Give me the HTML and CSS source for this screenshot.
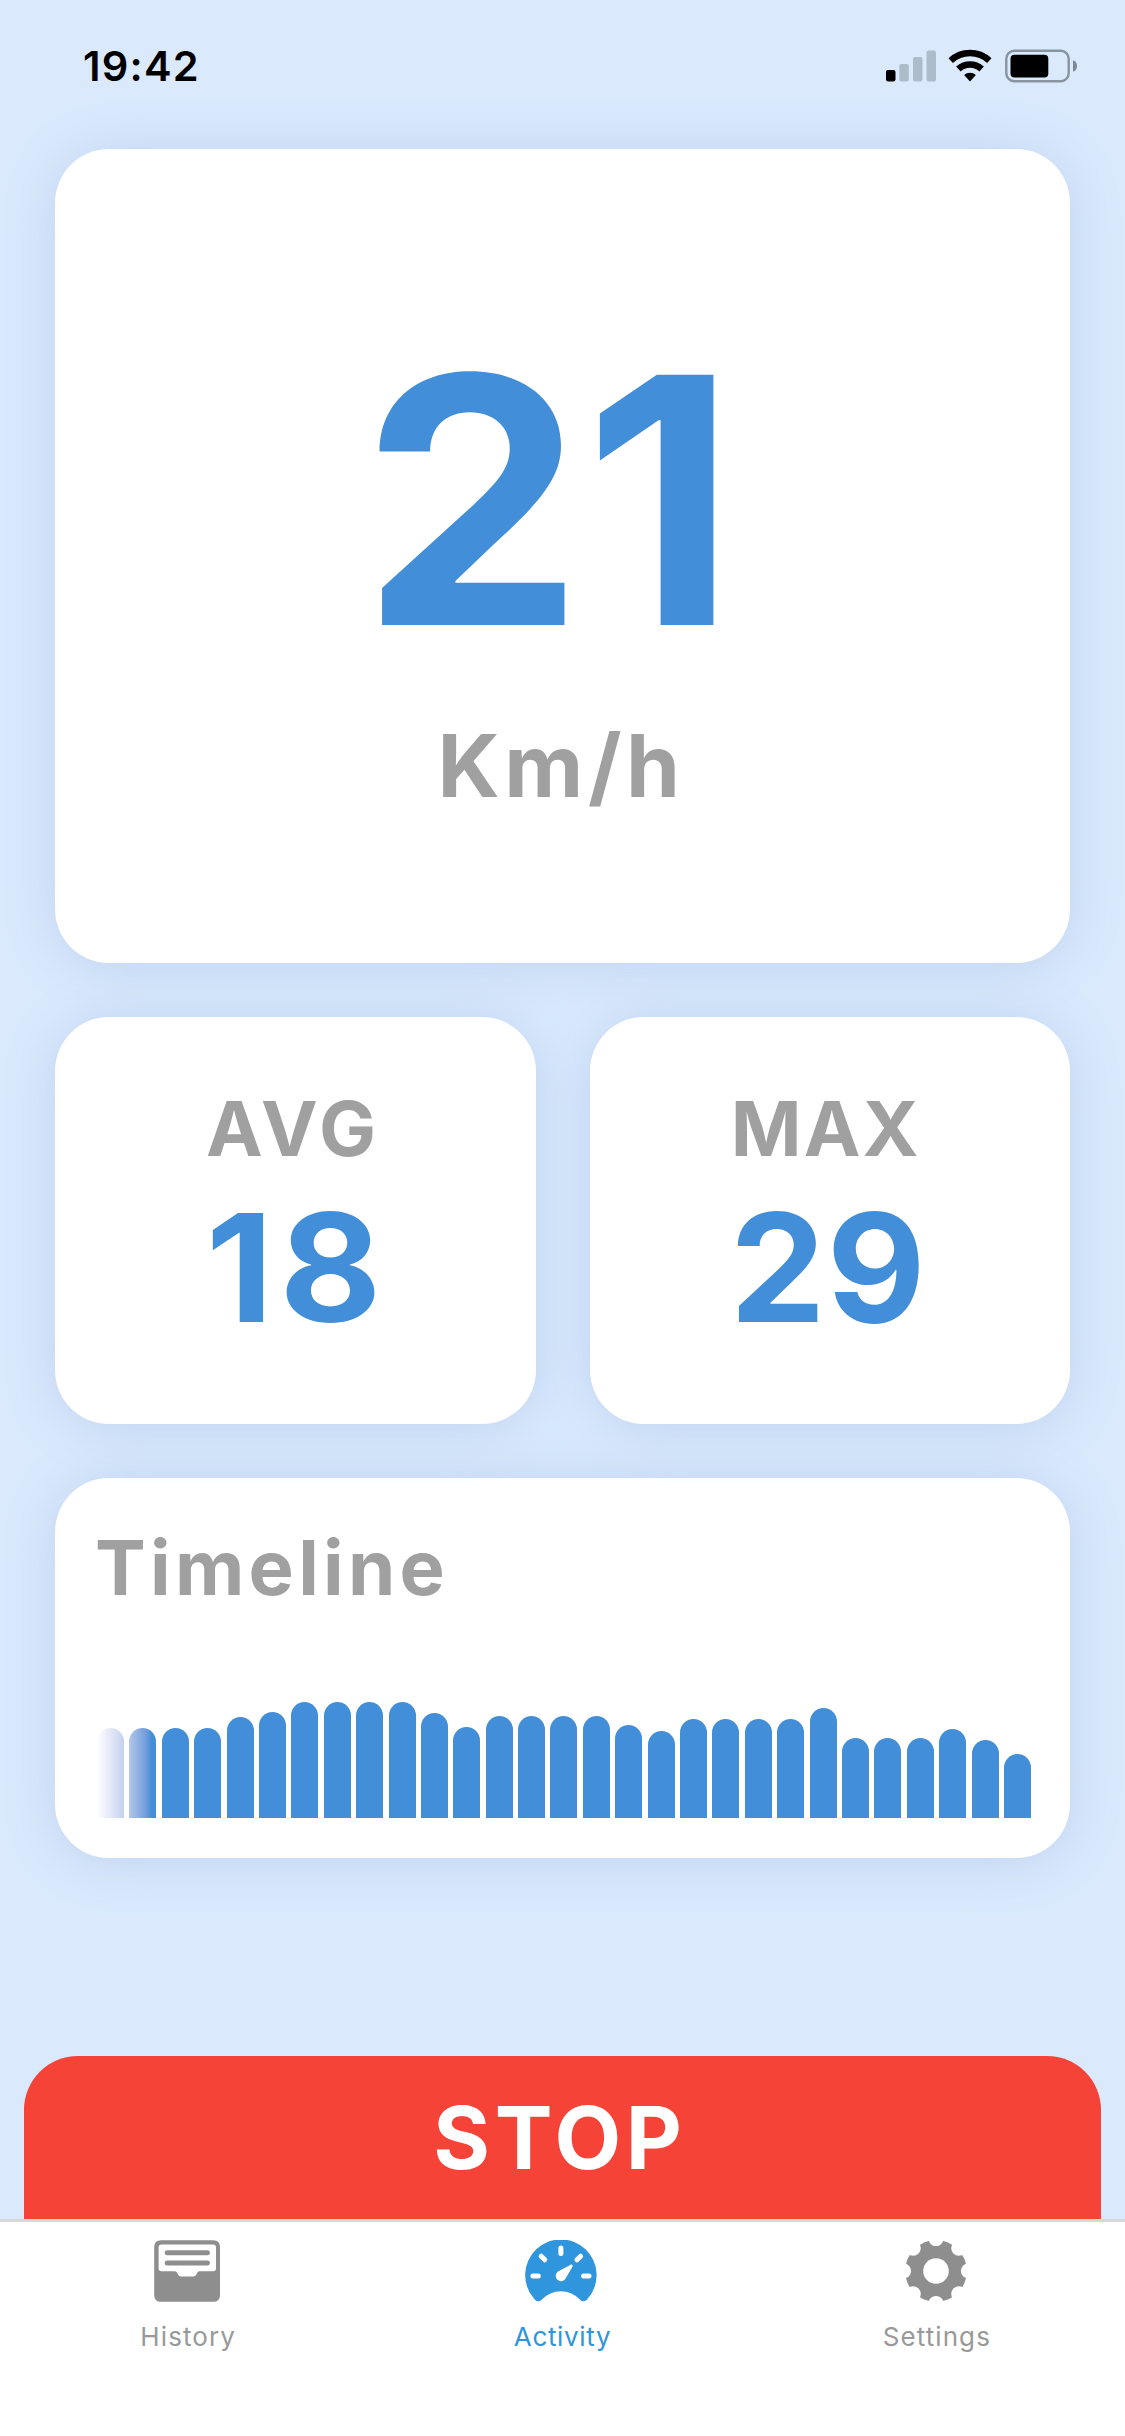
FILE: index.html
```
<!doctype html>
<html lang="en">
<head>
<meta charset="UTF-8">
<title>Activity</title>
<link rel="stylesheet" href="styles.css">
</head>
<body>
<div class="screen">
	<!-- status bar -->
	<div class="status">
		<div class="time">19:42</div>
		<div class="status_icons">
			<svg width="50" height="34" viewBox="0 0 50 34">
				<rect x="0" y="21" width="9.5" height="11.5" rx="2"/>
				<g fill="#acbccb">
					<rect x="13.3" y="15" width="9.5" height="17.5" rx="2"/>
					<rect x="27" y="8" width="9.5" height="24.5" rx="2"/>
					<rect x="40.5" y="1.5" width="9.5" height="31" rx="2"/>
				</g>
			</svg>
			<svg class="wifi" width="44" height="34" viewBox="0 0 44 34">
				<g fill="none" stroke="#000">
					<path d="M2.7 11.6A28.3 28.3 0 0 1 41.3 11.6" stroke-width="6.4"/>
					<path d="M10.4 20A17 17 0 0 1 33.6 20" stroke-width="6.6"/>
				</g>
				<path d="M22 32.4L16.1 26A8.7 8.7 0 0 1 27.9 26Z"/>
			</svg>
			<svg class="battery" width="72" height="34" viewBox="0 0 72 34">
				<rect x="1.3" y="1.8" width="62.4" height="30.4" rx="8" fill="none" stroke="#8893a1" stroke-width="2.4"/>
				<rect x="5.5" y="5.8" width="37.8" height="22.6" rx="4"/>
				<path d="M68 11.3C70.8 12.3 72 14.5 72 17S70.8 21.7 68 22.7Z" fill="#7c8794"/>
			</svg>
		</div>
	</div>

	<div class="content">
		<div class="card speed">
			<div class="speed_num">21</div>
			<div class="speed_unit">Km/h</div>
		</div>
		<div class="row">
			<div class="card stat">
				<div class="stat_name avg_name">AVG</div>
				<div class="stat_num avg_num">18</div>
			</div>
			<div class="card stat">
				<div class="stat_name max_name">MAX</div>
				<div class="stat_num max_num">29</div>
			</div>
		</div>
		<div class="card timeline">
			<div class="timeline_name">Timeline</div>
			<div class="bars" id="bars"></div>
		</div>
	</div>

	<button class="stop">STOP</button>

	<!-- bottom tabs -->
	<div class="tabs">
		<div class="tab">
			<svg width="66" height="62" viewBox="0 0 66 62">
				<path fill="#8e8e8e" fill-rule="evenodd" d="M7 .3H59.2Q66 .3 66 7.1V54.9Q66 61.7 59.2 61.7H7Q.2 61.7 .2 54.9V7.1Q.2 .3 7 .3ZM7.6 4.4Q4.6 4.4 4.6 7.4V28.2Q4.6 31.2 7.6 31.2H21Q22.6 31.2 23.2 32.8L24 34.5Q24.9 36.5 27 36.5H39.4Q41.4 36.5 42.4 34.5L43.4 32.5Q44.2 31.2 45.6 31.2H59Q62 31.2 62 28.2V7.4Q62 4.4 59 4.4Z"/>
				<path stroke="#8e8e8e" stroke-width="5" stroke-linecap="round" d="M13.2 12.7H53.4M13.2 23H53.4"/>
			</svg>
			<span class="tab_name">History</span>
		</div>
		<div class="tab active">
			<svg width="72" height="62" viewBox="0 0 72 62">
				<path fill="#2f95dc" d="M9 58.6A35.7 35.7 0 1 1 62.8 58.6C61 61.7 57.7 62.1 55.2 59.7A26.2 26.2 0 0 0 16.6 59.7C14.1 62.1 10.8 61.7 9 58.6Z"/>
				<path stroke="#fff" stroke-width="5" stroke-linecap="round" d="M7.9 36H13.3M58.6 36H64M35.9 8V13.6M16.2 16.2L19.8 19.8M55.6 16.2L52 19.8"/>
				<path fill="#fff" d="M45.2 24.9C47 24 48.2 25.2 47.3 26.9L40.6 38.6A5.3 5.3 0 1 1 33 31.6Z"/>
			</svg>
			<span class="tab_name activity_name">Activity</span>
		</div>
		<div class="tab">
			<svg width="62" height="62" viewBox="-31 -31 62 62">
				<mask id="gear" maskUnits="userSpaceOnUse" x="-31" y="-31" width="62" height="62">
					<circle r="30.9" fill="#fff"/>
					<circle r="12.8"/>
					<circle cx="0" cy="-32.4" r="7.5"/>
					<circle cx="0" cy="32.4" r="7.5"/>
					<circle cx="-32.4" cy="0" r="7.5"/>
					<circle cx="32.4" cy="0" r="7.5"/>
					<circle cx="-22.9" cy="-22.9" r="7.7"/>
					<circle cx="22.9" cy="-22.9" r="7.7"/>
					<circle cx="-22.9" cy="22.9" r="7.7"/>
					<circle cx="22.9" cy="22.9" r="7.7"/>
				</mask>
				<rect x="-31" y="-31" width="62" height="62" fill="#8e8e8e" mask="url(#gear)"/>
			</svg>
			<span class="tab_name">Settings</span>
		</div>
	</div>
</div>
<script>
// bar heights, oldest first
var speeds = [90, 90, 90, 90, 101, 106, 116, 116, 116, 116, 105, 91, 102, 102, 102,
	102, 93, 87, 99, 99, 99, 99, 110, 80, 80, 80, 89, 78, 64];
var bars = document.getElementById("bars");
for(var i=0; i<speeds.length; i++){
	var bar = document.createElement("div");
	bar.className = "bar";
	bar.style.height = speeds[i] + "px";
	bars.appendChild(bar);
}
</script>
</body>
</html>
```
FILE: styles.css
```
*{
	box-sizing:border-box;
}
body{
	margin:0;
	background-color:#ffffff;
	font-family:Inter, "Liberation Sans", sans-serif;
}
.screen{
	height:2436px;
	display:flex; flex-direction:column;
	background-color:#daeafc;
}
.status{
	height:132px; flex:none;
	display:flex; justify-content:space-between;
	padding:0 48px 0 83px;
	color:#000000;
}
.time{
	font-size:41.5px; font-weight:600;
	line-height:132px; letter-spacing:1.2px;
}
.status_icons{
	display:flex; padding-top:49px;
}
.wifi{
	margin-left:12px;
}
.battery{
	margin-left:13px;
}
.content{
	height:1924px; flex:none;
	padding:17px 55px 0;
}
.card{
	background-color:#ffffff;
	border-radius:54px;
	box-shadow:0 3px 54px #bed1f1;
}
.speed{
	height:814px; padding-top:179px;
	text-align:center;
}
.speed_num{
	font-size:344px; font-weight:700;
	line-height:344px; letter-spacing:0;
	padding-right:27px;
	transform:scaleX(1.03);
	color:#428ed9;
}
.speed_unit{
	font-size:86.6px; font-weight:700;
	font-feature-settings:"calt" 0;
	line-height:88px; letter-spacing:4.6px;
	margin-top:50px; padding-right:3px;
	color:#a0a0a0;
}
.row{
	display:flex; gap:54px;
	margin-top:54px;
}
.stat{
	flex:1; height:407px;
	padding-top:73px;
	text-align:center;
}
.stat_name{
	font-size:76px; font-weight:700;
	line-height:76px;
	color:#a0a0a0;
}
.stat_num{
	font-size:150px; font-weight:700;
	line-height:150px; margin-top:27px;
	color:#428ed9;
}
.avg_name{
	letter-spacing:4.3px; padding-right:4px;
}
.avg_num{
	letter-spacing:6px; padding-left:3px;
	transform:scaleX(1.045);
}
.max_name{
	letter-spacing:2.1px; padding-right:8px;
}
.max_num{
	letter-spacing:1px; padding-right:4px;
	transform:scaleX(1.015);
}
.timeline{
	height:380px; margin-top:54px;
	padding:51px 39px 40px 42px;
	display:flex; flex-direction:column;
	justify-content:space-between;
}
.timeline_name{
	font-size:76px; font-weight:700;
	line-height:76px; letter-spacing:4.3px;
	margin-left:-2px;
	color:#a0a0a0;
}
.bars{
	display:flex; align-items:flex-end;
	gap:5.4px; height:120px;
}
.bar{
	flex:1;
	background-color:#428ed9;
	border-radius:14px 14px 0 0;
}
/* the oldest bars fade out */
.bar:nth-child(1){
	background:linear-gradient(to right, #ffffff, #e4e8f7 50%, #c3d1ee);
}
.bar:nth-child(2){
	background:linear-gradient(to right, #b3c6ea, #759fdc 60%, #428ed9 85%);
}
.stop{
	width:1077px; height:163px; flex:none;
	margin:0 auto; padding:0 5px 0 0;
	border:0; border-radius:54px 54px 0 0;
	background-color:#f54337; color:#ffffff;
	font-family:inherit; font-size:86.6px; font-weight:700;
	letter-spacing:4.7px;
}
.tabs{
	flex:1; display:flex;
	padding:18px 2px 0 0;
	border-top:3px solid #d8d8d8;
	background-color:#ffffff;
}
.tab{
	flex:1;
	display:flex; flex-direction:column; align-items:center;
	color:#999999;
}
.tab_name{
	margin-top:20px; padding-left:2px;
	font-size:26px; line-height:30px;
	letter-spacing:1.1px;
}
.activity_name{
	letter-spacing:0.65px;
}
.active{
	color:#2f95dc;
}
```
